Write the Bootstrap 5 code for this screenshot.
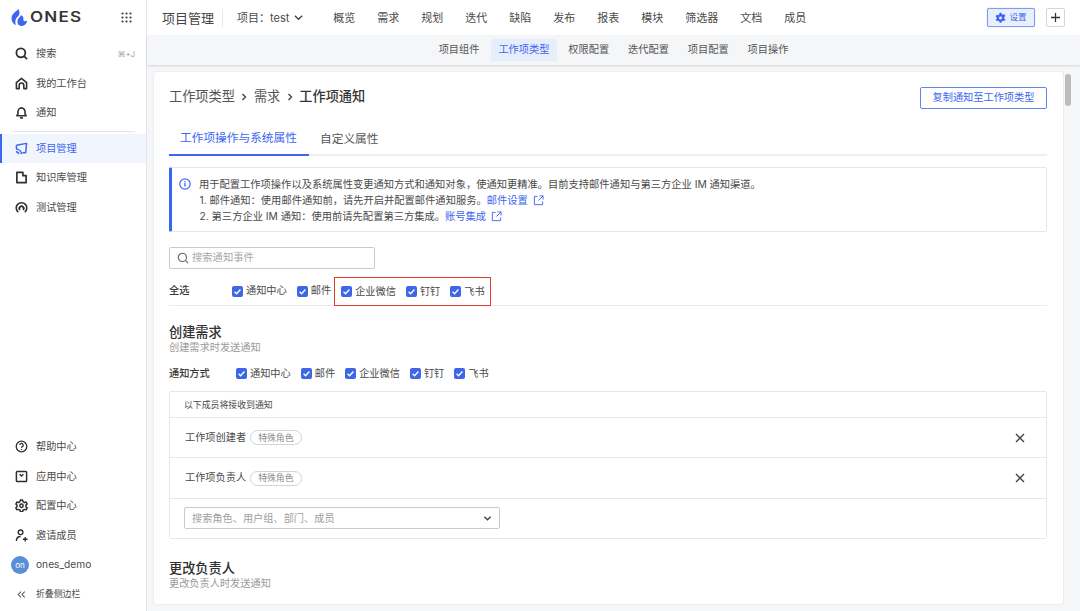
<!doctype html>
<html lang="zh">
<head>
<meta charset="utf-8">
<title>ONES</title>
<link href="https://cdn.jsdelivr.net/npm/bootstrap@5.3.0/dist/css/bootstrap.min.css" rel="stylesheet">
<style>
html,body{height:611px;overflow:hidden}
body{font-family:"Inter","Noto Sans CJK SC",sans-serif;color:#303030;background:#f5f6f8;font-size:10.2px;line-height:1.3}
.shell{height:611px}
.side{width:147px;background:#fff;border-right:1px solid #e4e5e8;flex:none}
.brand{height:35px;padding:0 14px 0 11px}
.brand-word{font-family:"Inter",sans-serif;font-weight:600;font-size:14px;letter-spacing:1px;color:#33373d;margin-left:3px;transform:scaleX(1.22);transform-origin:left center}
.dots{width:11px;height:11px;margin-left:auto;color:#3c3c3c}
.s-item{height:29.5px;padding-left:13px;color:#4a4a4a;font-size:10.2px;gap:8px;border-left:2px solid transparent}
.s-item svg{width:13px;height:13px;flex:none;color:#2f2f2f}
.s-item.on{background:#f1f5fe;border-left-color:#3d66f0;color:#3d66f0}
.s-item.on svg{color:#3d66f0}
.s-first{margin-top:4px}
.s-last{margin-bottom:2px}
.s-small{font-size:8.9px}
.kbd-hint{margin-left:auto;margin-right:11px;font-size:8px;color:#a6a6a6}
.s-sep{height:1px;background:#e6e7ea;margin:3.5px 11px 1.5px}
.avatar{width:18px;height:18px;border-radius:50%;background:#5a8fd6;color:#fff;font-size:8px;margin-left:-4px;margin-right:-1px}
.top{height:35px;background:#fff;padding:0 15px}
.top-title{font-size:13px;color:#454545;padding-right:8px;border-right:1px solid #e6e7ea;line-height:18px;margin-top:1px}
.top-proj{font-size:11px;color:#4a4a4a;margin-left:14px;margin-right:30px;gap:5px;margin-top:1px}
.top-link{font-size:11px;color:#4a4a4a;margin-right:22px;margin-top:1px}
.set-btn{background:#e8f0fe;border:1px solid #7c9cf5;border-radius:2px;color:#3d66f0;font-size:8.5px;height:19px;width:48px;gap:3px;box-shadow:0 0 1px #7c9cf5;padding:0}
.plus-btn{background:#fff;border:1px solid #d5d6d9;border-radius:2px;width:19px;height:19px;margin-left:11px;color:#333;padding:0}
.subbar{height:30px;background:#f5f6f8;box-shadow:0 1px 2px rgba(0,0,0,.14);position:relative}
.sub-link{font-size:10.2px;color:#555;height:22px;padding:0 7.5px;margin:0 2px;border-radius:2px}
.sub-link.on{background:#e6edfb;color:#3d66f0}
.workarea{min-height:0;padding:7px 8px 7px 7px}
.panel{background:#fff;border-radius:3px;box-shadow:0 0 2px rgba(0,0,0,.12);padding:0 16px 0 15px;overflow:hidden;min-width:0}
.sbar{width:9px;background:#f7f7f8;border-left:1px solid #ececec;flex:none;padding:2px 1px}
.sthumb{height:32px;background:#bcbcbc;border-radius:3px}
.crumbs{height:49px;font-size:13.2px;color:#555;gap:5.5px}
.crumbs b{font-weight:500;color:#333}
.copy-btn{margin-left:auto;margin-top:2px;width:127px;height:22px;border:1px solid #5f86f0;color:#3d66f0;background:#fff;border-radius:2px;font-size:10.2px;padding:0}
.tabbar{height:35px;border-bottom:2px solid #eeeff1}
.tab-i{font-size:11.7px;color:#555;padding:2px 11px 0;height:35px;white-space:nowrap}
.tab-i.on{color:#3d66f0;border-bottom:2px solid #3d66f0;width:140px}
.notice{margin-top:11px;height:65px;border:1px solid #e6e7ea;border-left:3px solid #3d66f0;border-radius:2px;padding:8px 0 0 7px;font-size:10.28px;line-height:16.2px;color:#4a4a4a;gap:8px}
.notice a{color:#3d66f0;text-decoration:none}
.ni{width:12px;height:12px;flex:none;margin-top:2px;color:#3d66f0}
.ext{width:11px;height:11px;color:#3d66f0;margin-left:2px;vertical-align:-1.5px}
.numline{padding-left:.5px}
.searchbox{width:206px;height:21.5px;border:1px solid #c9cacd;border-radius:2px;margin-top:15px;padding-left:7px;color:#a8a8a8;font-size:10.3px;gap:3px}
.searchbox svg{width:12px;height:12px;color:#666}
.allrow{height:29px;margin-top:8.5px;border-bottom:1px solid #eaebed;color:#4a4a4a}
.lbl{font-weight:500;color:#3b3b3b;font-size:10.2px}
.allrow .lbl{width:63px}
.chk{display:inline-flex;align-items:center;gap:3px;font-size:10.2px;color:#4a4a4a;margin-right:10px;white-space:nowrap}
.chk svg{width:11px;height:11px;flex:none}
.redbox{border:1.3px solid #e8392f;height:28.5px;padding:0 5px 0 6px;margin-left:-7px;align-self:flex-start}
.redbox .chk:last-child{margin-right:0}
.h-sec{font-size:13.2px;font-weight:500;color:#303030;line-height:17px}
.h-sub{font-size:10.2px;color:#9a9a9a;line-height:13px}
.sec1{margin-top:18px}
.modrow{height:35px;margin-top:2px}
.modrow .lbl{width:67px}
.box{border:1px solid #e6e7ea;border-radius:2px}
.box-h{height:26px;padding-left:14px;font-size:8.9px;color:#4a4a4a;border-bottom:1px solid #e6e7ea}
.box-r{height:41px;padding:0 21px 0 15px;font-size:10.2px;color:#4a4a4a;border-bottom:1px solid #e6e7ea;gap:4px}
.box-r1{height:40px}
.pilltag{border:1px solid #d2d3d6;border-radius:8px;height:15px;padding:0 7px;font-size:8.9px;color:#8f8f8f}
.x-ico{width:10px;height:10px;margin-left:auto;color:#444}
.box-s{height:38.5px;padding-left:14px}
.pick{width:316px;height:22px;border:1px solid #c9cacd;border-radius:2px;padding:0 7px 0 7px;color:#a0a0a0;font-size:10.2px}
.pick svg{width:9px;height:9px;margin-left:auto;color:#444}
.sec2{margin-top:21px}
</style>
</head>
<body>
<svg width="0" height="0" class="position-absolute">
<defs>
<symbol id="cb" viewBox="0 0 12 12"><rect width="12" height="12" rx="2.2" fill="#3d66e8"/><path d="M2.8 6.2l2.2 2.2 4.2-4.6" fill="none" stroke="#fff" stroke-width="1.5"/></symbol>
<symbol id="ext" viewBox="0 0 12 12"><path d="M5 1.500H1.500v9h9V7M7 1h4v4M11 1L6 6" fill="none" stroke="currentColor" stroke-width="1"/></symbol>
</defs>
</svg>
<div class="shell d-flex">
  <aside class="side d-flex flex-column">
    <div class="brand d-flex align-items-center">
      <svg width="16" height="19" viewBox="0 0 16 19"><path d="M7.500 1C6 3 2 4.500 .8 8.500 0 12 1.500 16 5 17c-1-2-1-5 .5-7 1-1.500 3-2.500 3-5 0-1.500-.5-3-1-4z" fill="#3d66f0"/><path d="M10 7c-.5 2-3 3-3.500 5.500C6 15 7.500 18 10.500 18c3 0 5.500-2.500 5.500-5.500-1.500 1-3 1-3.500 0-.5-1 .5-2-.5-3.500-.5-1-1.500-1.500-2-2z" fill="#3d66f0"/></svg>
      <span class="brand-word">ONES</span>
      <svg class="dots" viewBox="0 0 11 11" fill="currentColor"><circle cx="1.500" cy="1.500" r="1.100"/><circle cx="5.500" cy="1.500" r="1.100"/><circle cx="9.500" cy="1.500" r="1.100"/><circle cx="1.500" cy="5.500" r="1.100"/><circle cx="5.500" cy="5.500" r="1.100"/><circle cx="9.500" cy="5.500" r="1.100"/><circle cx="1.500" cy="9.500" r="1.100"/><circle cx="5.500" cy="9.500" r="1.100"/><circle cx="9.500" cy="9.500" r="1.100"/></svg>
    </div>
    <div class="s-item s-first d-flex align-items-center"><svg viewBox="0 0 14 14" fill="none" stroke="currentColor" stroke-width="1.900"><circle cx="6.300" cy="6.300" r="4.800"/><path d="M9.800 9.800L13 13"/></svg>搜索<span class="kbd-hint">⌘+J</span></div>
    <div class="s-item d-flex align-items-center"><svg viewBox="0 0 14 14" fill="none" stroke="currentColor" stroke-width="1.700"><path d="M1.500 12.500V6L7 1.500 12.500 6v6.500H9.500V9a2.500 2.500 0 0 0-5 0v3.500z" stroke-linejoin="round"/></svg>我的工作台</div>
    <div class="s-item d-flex align-items-center"><svg viewBox="0 0 14 14" fill="none" stroke="currentColor" stroke-width="1.700"><path d="M2 10.500h10l-1.200-2V6a3.800 3.800 0 0 0-7.600 0v2.500zM7 1v1M5.500 12.800h3" stroke-linejoin="round"/></svg>通知</div>
    <div class="s-sep"></div>
    <div class="s-item on d-flex align-items-center"><svg viewBox="0 0 14 14" fill="none" stroke="currentColor" stroke-width="1.600"><path d="M1.500 3.500L12.500 1.500 11.500 11.500H8M1.500 3.500V7M1 10.500a3 3 0 0 1 3 2.500M1 7.500a6 6 0 0 1 6 5.500" stroke-linejoin="round"/></svg>项目管理</div>
    <div class="s-item d-flex align-items-center"><svg viewBox="0 0 14 14" fill="none" stroke="currentColor" stroke-width="1.800"><path d="M2 1.500h6.500v3.500H12v7.500H2z" stroke-linejoin="round"/></svg>知识库管理</div>
    <div class="s-item d-flex align-items-center"><svg viewBox="0 0 14 14" fill="none" stroke="currentColor" stroke-width="1.700"><path d="M3.500 12a5.700 5.700 0 1 1 7 0"/><path d="M5.300 9.500a2.300 2.300 0 1 1 3.400 0" stroke-width="2"/></svg>测试管理</div>
    <div class="flex-grow-1"></div>
    <div class="s-item d-flex align-items-center"><svg viewBox="0 0 14 14" fill="none" stroke="currentColor" stroke-width="1.400"><circle cx="7" cy="7" r="5.700"/><path d="M5.200 5.500a1.800 1.800 0 1 1 2.600 1.600c-.6.300-.8.700-.8 1.300M7 9.700v1"/></svg>帮助中心</div>
    <div class="s-item d-flex align-items-center"><svg viewBox="0 0 14 14" fill="none" stroke="currentColor" stroke-width="1.600"><rect x="1.500" y="1.500" width="11" height="11" rx="1"/><path d="M5 4.500L7 6.500 9 4.500"/></svg>应用中心</div>
    <div class="s-item d-flex align-items-center"><svg viewBox="0 0 14 14" fill="none" stroke="currentColor" stroke-width="1.600"><path d="M5.800 1.200h2.400l.4 1.700 1.600.9 1.700-.5 1.200 2.100-1.300 1.200v1.800l1.300 1.200-1.200 2.100-1.700-.5-1.600.9-.4 1.700H5.800l-.4-1.700-1.600-.9-1.700.5L.9 9.600l1.300-1.200V6.600L.9 5.400l1.200-2.100 1.700.5 1.600-.9z" stroke-linejoin="round"/><circle cx="7" cy="7.300" r="1.800"/></svg>配置中心</div>
    <div class="s-item d-flex align-items-center"><svg viewBox="0 0 14 14" fill="none" stroke="currentColor" stroke-width="1.500"><circle cx="6" cy="3.500" r="2.500"/><path d="M1.500 13c0-3 1.500-5 4.500-5M8.500 11h5M11 8.500v5"/></svg>邀请成员</div>
    <div class="s-item d-flex align-items-center"><span class="avatar d-flex align-items-center justify-content-center">on</span>ones_demo</div>
    <div class="s-item s-last d-flex align-items-center"><svg viewBox="0 0 14 14" fill="none" stroke="#555" stroke-width="1.100"><path d="M6.500 4L3.500 7l3 3M10.500 4l-3 3 3 3"/></svg><span class="s-small">折叠侧边栏</span></div>
  </aside>
  <main class="flex-grow-1 d-flex flex-column" style="min-width:0">
    <div class="top d-flex align-items-center">
      <span class="top-title">项目管理</span>
      <span class="top-proj d-flex align-items-center">项目：test <svg width="9" height="9" viewBox="0 0 10 10" fill="none" stroke="#444" stroke-width="1.500"><path d="M1 3l4 4 4-4"/></svg></span>
      <span class="top-link">概览</span><span class="top-link">需求</span><span class="top-link">规划</span><span class="top-link">迭代</span><span class="top-link">缺陷</span><span class="top-link">发布</span><span class="top-link">报表</span><span class="top-link">模块</span><span class="top-link">筛选器</span><span class="top-link">文档</span><span class="top-link">成员</span>
      <button class="btn set-btn ms-auto d-flex align-items-center justify-content-center"><svg width="11" height="11" viewBox="0 0 14 14"><path d="M5.800 .8h2.400l.4 1.900 1.600.9 1.800-.6 1.200 2.100-1.400 1.300v1.800l1.400 1.300-1.200 2.100-1.800-.6-1.600.9-.4 1.900H5.800l-.4-1.900-1.600-.9-1.800.6L.8 10l1.400-1.300V6.900L.8 5.600 2 3.500l1.800.6 1.600-.9z" fill="#3d66f0"/><circle cx="7" cy="7.500" r="1.900" fill="#e8f0fe"/></svg>设置</button>
      <button class="btn plus-btn d-flex align-items-center justify-content-center"><svg width="9" height="9" viewBox="0 0 10 10" stroke="#333" stroke-width="1.400"><path d="M5 0v10M0 5h10"/></svg></button>
    </div>
    <div class="subbar d-flex align-items-center justify-content-center">
      <span class="sub-link d-flex align-items-center">项目组件</span><span class="sub-link on d-flex align-items-center">工作项类型</span><span class="sub-link d-flex align-items-center">权限配置</span><span class="sub-link d-flex align-items-center">迭代配置</span><span class="sub-link d-flex align-items-center">项目配置</span><span class="sub-link d-flex align-items-center">项目操作</span>
    </div>
    <div class="workarea flex-grow-1 d-flex">
      <div class="panel flex-grow-1">
        <div class="crumbs d-flex align-items-center">工作项类型 <svg width="8" height="8" viewBox="0 0 8 8" fill="none" stroke="#444" stroke-width="1.400"><path d="M2.500 1L5.500 4 2.500 7"/></svg> 需求 <svg width="8" height="8" viewBox="0 0 8 8" fill="none" stroke="#444" stroke-width="1.400"><path d="M2.500 1L5.500 4 2.500 7"/></svg> <b>工作项通知</b>
          <button class="btn copy-btn">复制通知至工作项类型</button></div>
        <div class="tabbar d-flex">
          <span class="tab-i on d-flex align-items-center">工作项操作与系统属性</span><span class="tab-i d-flex align-items-center">自定义属性</span>
        </div>
        <div class="notice d-flex">
          <svg class="ni" viewBox="0 0 12 12" fill="none" stroke="currentColor" stroke-width="1.200"><circle cx="6" cy="6" r="5.200"/><path d="M6 5v3.500M6 3v1.200" stroke-width="1.300"/></svg>
          <div>
            <div>用于配置工作项操作以及系统属性变更通知方式和通知对象，使通知更精准。目前支持邮件通知与第三方企业 IM 通知渠道。</div>
            <div class="numline">1. 邮件通知：使用邮件通知前，请先开启并配置邮件通知服务。<a href="#">邮件设置 <svg class="ext"><use href="#ext"/></svg></a></div>
            <div class="numline">2. 第三方企业 IM 通知：使用前请先配置第三方集成。<a href="#">账号集成 <svg class="ext"><use href="#ext"/></svg></a></div>
          </div>
        </div>
        <div class="searchbox d-flex align-items-center"><svg viewBox="0 0 14 14" fill="none" stroke="currentColor" stroke-width="1.300"><circle cx="6.300" cy="6.300" r="4.800"/><path d="M9.800 9.800L13 13"/></svg>搜索通知事件</div>
        <div class="allrow d-flex align-items-center">
          <span class="lbl">全选</span>
          <label class="chk"><svg><use href="#cb"/></svg>通知中心</label>
          <label class="chk"><svg><use href="#cb"/></svg>邮件</label>
          <div class="redbox d-flex align-items-center">
            <label class="chk"><svg><use href="#cb"/></svg>企业微信</label>
            <label class="chk"><svg><use href="#cb"/></svg>钉钉</label>
            <label class="chk"><svg><use href="#cb"/></svg>飞书</label>
          </div>
        </div>
        <div class="sec1"><div class="h-sec">创建需求</div><div class="h-sub">创建需求时发送通知</div></div>
        <div class="modrow d-flex align-items-center">
          <span class="lbl">通知方式</span>
          <label class="chk"><svg><use href="#cb"/></svg>通知中心</label>
          <label class="chk"><svg><use href="#cb"/></svg>邮件</label>
          <label class="chk"><svg><use href="#cb"/></svg>企业微信</label>
          <label class="chk"><svg><use href="#cb"/></svg>钉钉</label>
          <label class="chk"><svg><use href="#cb"/></svg>飞书</label>
        </div>
        <div class="box">
          <div class="box-h d-flex align-items-center">以下成员将接收到通知</div>
          <div class="box-r box-r1 d-flex align-items-center">工作项创建者<span class="pilltag d-flex align-items-center">特殊角色</span><svg class="x-ico" viewBox="0 0 10 10" stroke="currentColor" stroke-width="1.400"><path d="M1 1l8 8M9 1L1 9"/></svg></div>
          <div class="box-r d-flex align-items-center">工作项负责人<span class="pilltag d-flex align-items-center">特殊角色</span><svg class="x-ico" viewBox="0 0 10 10" stroke="currentColor" stroke-width="1.400"><path d="M1 1l8 8M9 1L1 9"/></svg></div>
          <div class="box-s d-flex align-items-center"><div class="pick d-flex align-items-center">搜索角色、用户组、部门、成员<svg viewBox="0 0 10 10" fill="none" stroke="currentColor" stroke-width="1.500"><path d="M1.500 3l3.500 3.500L8.500 3"/></svg></div></div>
        </div>
        <div class="sec2"><div class="h-sec">更改负责人</div><div class="h-sub">更改负责人时发送通知</div></div>
      </div>
      <div class="sbar"><div class="sthumb"></div></div>
    </div>
  </main>
</div>
<script src="https://cdn.jsdelivr.net/npm/bootstrap@5.3.0/dist/js/bootstrap.bundle.min.js"></script>
</body>
</html>
